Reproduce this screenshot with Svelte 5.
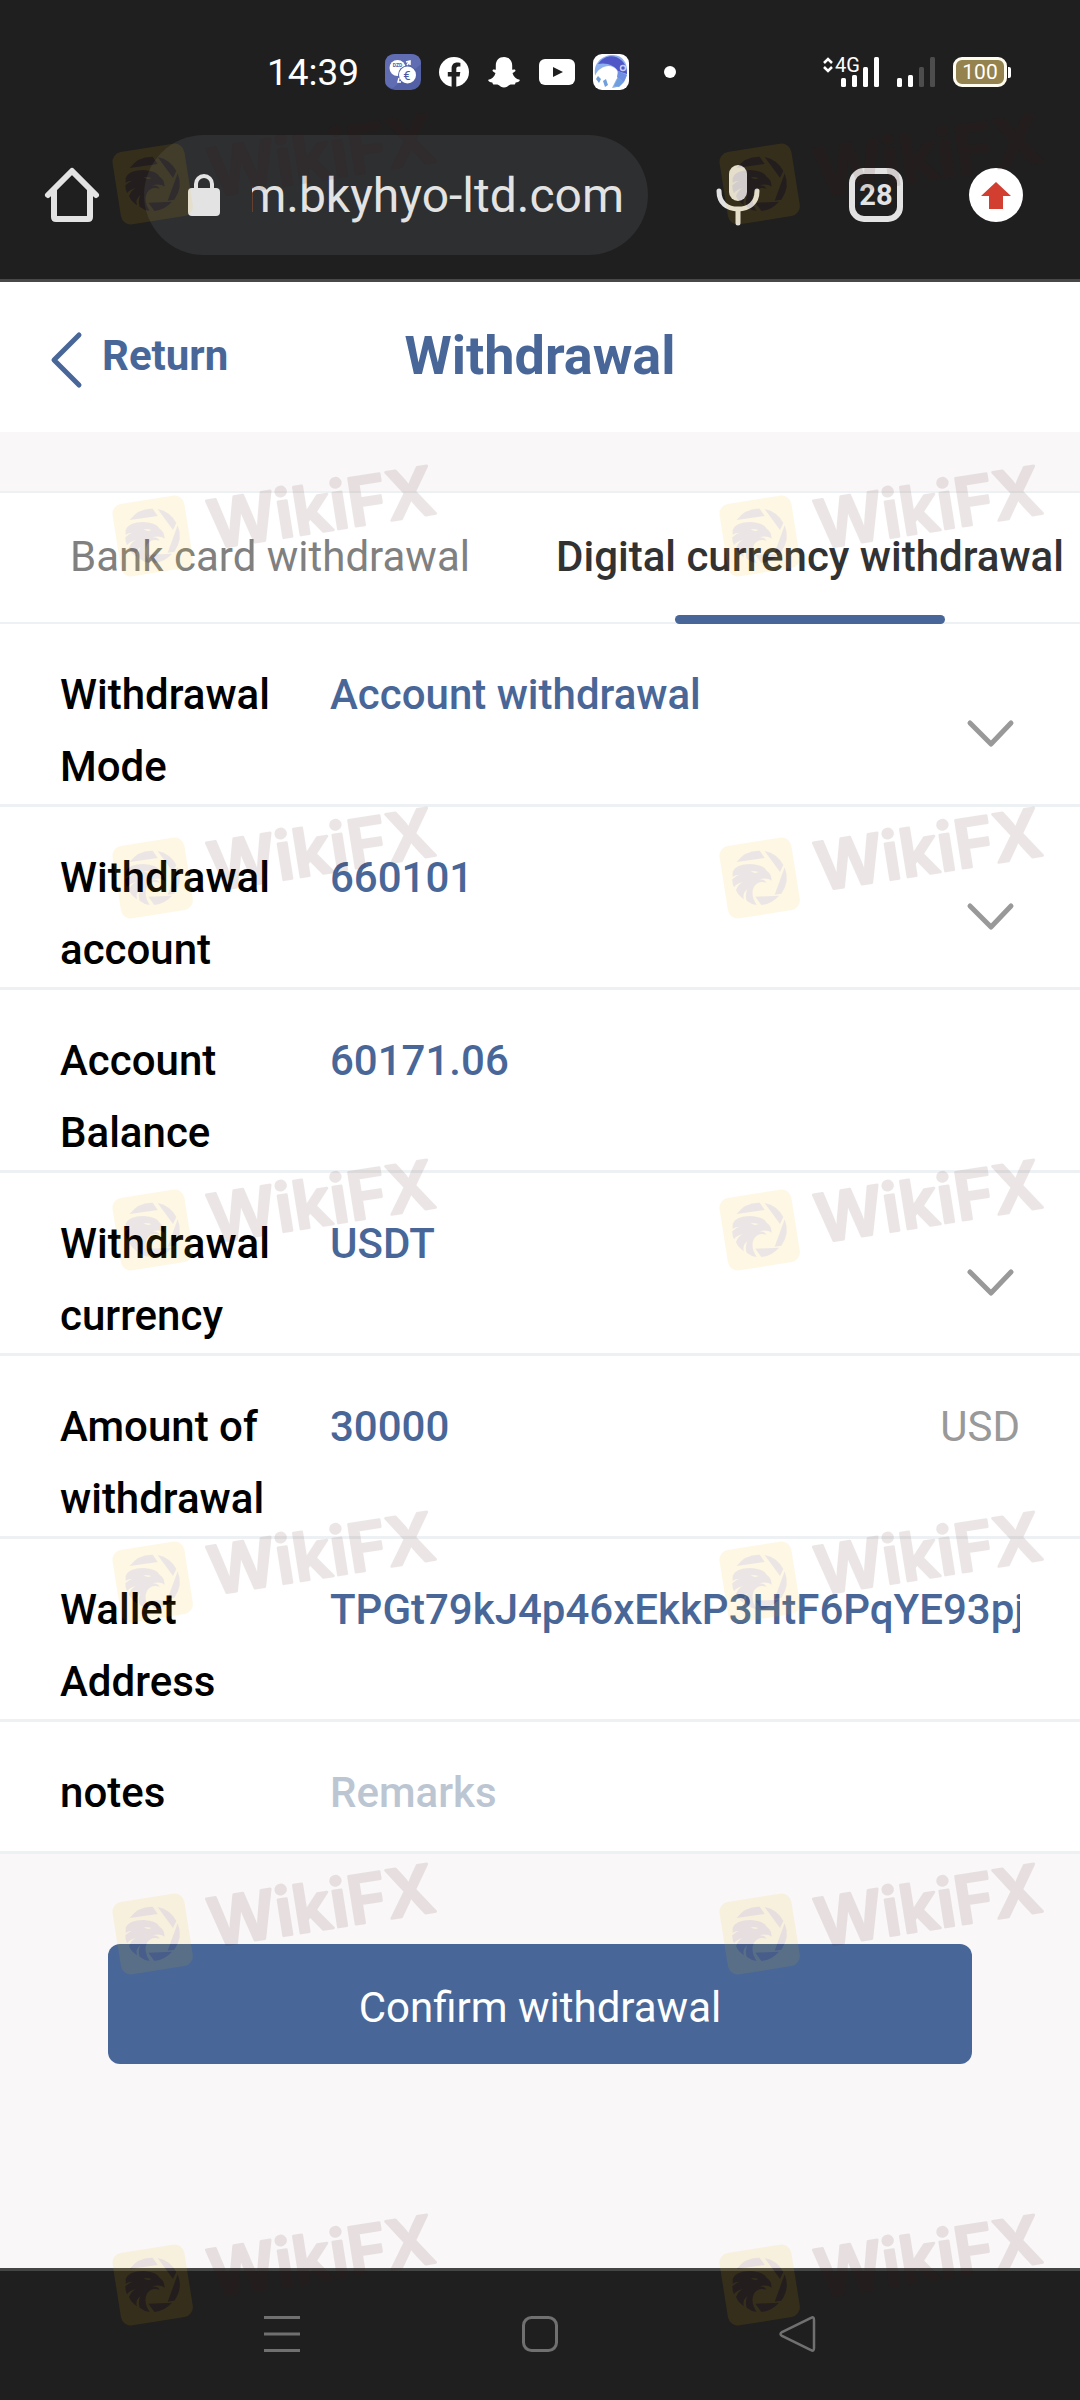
<script>
  const fields = [
    { id: 'mode', label: 'Withdrawal Mode', value: 'Account withdrawal', kind: 'select' },
    { id: 'account', label: 'Withdrawal account', value: '660101', kind: 'select' },
    { id: 'balance', label: 'Account Balance', value: '60171.06', kind: 'output' },
    { id: 'currency', label: 'Withdrawal currency', value: 'USDT', kind: 'select' },
    { id: 'amount', label: 'Amount of withdrawal', value: '30000', kind: 'input', unit: 'USD' },
    { id: 'wallet', label: 'Wallet Address', value: 'TPGt79kJ4p46xEkkP3HtF6PqYE93pj', kind: 'input' },
    { id: 'notes', label: 'notes', value: '', kind: 'input', placeholder: 'Remarks' }
  ];
  const markRows = [110, 462, 804, 1156, 1508, 1860, 2211];
  const markColumns = [112, 719];
  const marks = markRows.flatMap((top) => markColumns.map((left) => ({ top, left })));
</script>

<div class="screen">
  <div class="status">
    <span class="time">14:39</span>
    <div class="notifications">
      <svg width="36" height="36" viewBox="0 0 36 36" aria-hidden="true">
        <rect width="36" height="36" rx="10" fill="#5360a6" />
        <path d="M10 0H26Q36 0 36 10L8 34Q0 34 0 26V10Q0 0 10 0Z" fill="#606db3" />
        <circle cx="12.500" cy="14" r="8" fill="#fff" />
        <circle cx="22.500" cy="21" r="9.500" fill="#5360a6" />
        <circle cx="22.500" cy="21" r="8.500" fill="#fff" />
        <text x="12.500" y="13" font-size="5" font-weight="700" text-anchor="middle" fill="#5360a6">DZD</text>
        <text x="22" y="26" font-size="13" text-anchor="middle" fill="#4b579c">€</text>
        <path d="M21 8l4-1v4M25 7l-3 4M14 24l-1 4h3" fill="none" stroke="#fff" stroke-width="1.500" />
      </svg>
      <svg width="30" height="30" viewBox="0 0 30 30" aria-hidden="true">
        <circle cx="15" cy="15" r="15" fill="#fff" />
        <path d="M12.600 30V19.500H8.800V15h3.800v-3.400c0-3.900 2.200-6 5.700-6 1.500 0 3.100.3 3.100.3v3.600h-1.800c-1.800 0-2.300 1.100-2.300 2.200V15h4l-.7 4.500h-3.300V30z" fill="#1f1f1f" />
      </svg>
      <svg class="snap" width="32" height="31" viewBox="0 0 32 31" aria-hidden="true">
        <path d="M16 0c5 0 8.200 3.500 8.200 8.200v4.300c1 .6 2.300-.6 3.100.4.800 1.200-1 2.200-2.800 3 .9 3.500 3.600 6 7.200 6.800.5 1.600-1.600 2.300-4 2.800-.5.700-.3 1.800-1.200 2-1.600.2-3.200-.5-5 .4-1.700 1-3 2.600-5.500 2.600s-3.800-1.600-5.500-2.600c-1.800-.9-3.400-.2-5-.4-.9-.2-.7-1.300-1.200-2-2.400-.5-4.500-1.200-4-2.800 3.600-.8 6.300-3.300 7.200-6.800-1.800-.8-3.600-1.800-2.800-3 .8-1 2.100.2 3.100-.4V8.200C7.800 3.500 11 0 16 0z" fill="#fff" />
      </svg>
      <svg width="36" height="26" viewBox="0 0 36 26" aria-hidden="true">
        <rect width="36" height="26" rx="6" fill="#fff" />
        <path d="M14 8l10 5-10 5z" fill="#1f1f1f" />
      </svg>
      <svg width="36" height="36" viewBox="0 0 36 36" aria-hidden="true">
        <rect width="36" height="36" rx="9" fill="#fff" />
        <path d="M2 21C0 9 9 1 20 1c10 0 15 9 14 18-1 9-8 15-16 15L2 21z" fill="#8fb0ee" />
        <path d="M5 10C11 1 22 0 28 6c4 3 6 9 6 14l-9-3C22 12 14 8 5 10z" fill="#5058c8" />
        <path d="M2 22C5 14 14 10 20 13c5 2 7 8 3 13l-2 4-2 4H8z" fill="#fff" />
        <path d="M5 22l3 3-2 4-3-4zM10 27l3-2 2 6-3 2zM21 32l4-8 6 4-5 5z" fill="#6f9fdc" />
        <path d="M25 17l9 4-3 7-7-5z" fill="#6f8fe0" />
        <circle cx="30" cy="14" r="2.500" fill="none" stroke="#c3cdf6" stroke-width="1.500" />
      </svg>
    </div>
    <span class="dot"></span>
    <svg class="signal" width="112" height="30" viewBox="0 0 112 30" aria-label="Mobile signal">
      <g fill="none" stroke="#fff" stroke-width="2.500"><path d="M1 6l4-4 4 4M1 10l4 4 4-4" /></g>
      <text x="12" y="15" font-size="20" font-weight="400" fill="#fff">4G</text>
      <g fill="#fff">
        <rect x="18" y="21" width="5" height="9" rx="1.500" /><rect x="29" y="18" width="5" height="12" rx="1.500" />
        <rect x="40" y="10" width="5" height="20" rx="1.500" /><rect x="51" y="0" width="5" height="30" rx="1.500" />
        <rect x="74" y="21" width="5" height="9" rx="1.500" /><rect x="85" y="18" width="5" height="12" rx="1.500" />
      </g>
      <g fill="#4d4d4d"><rect x="96" y="10" width="5" height="20" rx="1.500" /><rect x="107" y="0" width="5" height="30" rx="1.500" /></g>
    </svg>
    <span class="battery">100</span>
    <span class="battery-tip"></span>
  </div>

  <div class="toolbar">
    <button class="icon" aria-label="Home">
      <svg width="54" height="54" viewBox="0 0 54 54">
        <path d="M3 27L27 3l24 24M9 22v27q0 2 2 2h32q2 0 2-2V22" fill="none" stroke="#e3e3e3" stroke-width="6" stroke-linecap="round" stroke-linejoin="round" />
      </svg>
    </button>
    <div class="address">
      <svg width="32" height="42" viewBox="0 0 32 42" aria-hidden="true">
        <rect y="14" width="32" height="28" rx="4" fill="#e3e3e3" />
        <path d="M8 16v-6a8 8 0 0 1 16 0v6" fill="none" stroke="#e3e3e3" stroke-width="4" />
      </svg>
      <div class="url"><span>m.bkyhyo-ltd.com</span></div>
    </div>
    <button class="icon" aria-label="Voice search">
      <svg width="42" height="60" viewBox="0 0 42 60">
        <rect x="12" width="18" height="36" rx="9" fill="#e3e3e3" />
        <path d="M2 26c0 12 8 18 19 18s19-6 19-18M21 44v14" fill="none" stroke="#e3e3e3" stroke-width="5" stroke-linecap="round" />
      </svg>
    </button>
    <button class="tab-count">28</button>
    <button class="icon" aria-label="Update available">
      <svg width="54" height="54" viewBox="0 0 54 54">
        <circle cx="27" cy="27" r="27" fill="#fff" />
        <path d="M27 14l15 14h-8v13H20V28h-8z" fill="#d23f31" />
      </svg>
    </button>
  </div>

  <header>
    <a class="back" href="#return">
      <svg width="30" height="64" viewBox="0 0 30 64" aria-hidden="true">
        <path d="M28 12L3 37l25 25" fill="none" stroke="#486798" stroke-width="5" stroke-linecap="round" stroke-linejoin="round" />
      </svg>
      Return
    </a>
    <h1>Withdrawal</h1>
  </header>

  <main>
    <nav class="tabs">
      <button>Bank card withdrawal</button>
      <button class="active">Digital currency withdrawal</button>
    </nav>
    <form onsubmit={(event) => event.preventDefault()}>
      {#each fields as field}
        <div class="row">
          <label for={field.id}>{field.label}</label>
          {#if field.kind === 'select'}
            <select id={field.id}><option>{field.value}</option></select>
            <svg class="chevron" width="54" height="32" viewBox="0 0 54 32" aria-hidden="true">
              <path d="M4 8l21 21L45 8" fill="none" stroke="#999" stroke-width="5" stroke-linecap="round" stroke-linejoin="round" />
            </svg>
          {:else if field.kind === 'output'}
            <output id={field.id}>{field.value}</output>
          {:else}
            <input id={field.id} type="text" value={field.value} placeholder={field.placeholder} />
            {#if field.unit}<span class="unit">{field.unit}</span>{/if}
          {/if}
        </div>
      {/each}
      <button class="confirm">Confirm withdrawal</button>
    </form>
  </main>

  <div class="system-nav">
    <button class="icon" aria-label="Recent apps">
      <svg width="36" height="36" viewBox="0 0 36 36"><path d="M0 1.500h36M0 18h36M0 34.500h36" stroke="#707070" stroke-width="3" /></svg>
    </button>
    <button class="icon" aria-label="Home screen">
      <svg width="36" height="36" viewBox="0 0 36 36"><rect x="1.500" y="1.500" width="33" height="33" rx="8" fill="none" stroke="#707070" stroke-width="3" /></svg>
    </button>
    <button class="icon" aria-label="Back">
      <svg width="36" height="36" viewBox="0 0 36 36"><path d="M31 2Q34 0 34 4v28q0 4-3 2L2 20q-3-2 0-4z" fill="none" stroke="#707070" stroke-width="2.500" /></svg>
    </button>
  </div>

  <div class="marks" aria-hidden="true">
    {#each marks as mark}
      <svg style:top="{mark.top}px" style:left="{mark.left}px" width="328" height="116" viewBox="95 58 984 348">
        <rect x="108" y="170" width="218" height="220" rx="30" transform="rotate(-9 217 280)" fill="#eeb600" />
        <g fill="#4a1010">
          <path d="M148 232A82 82 0 0 1 217 198L232 220z" />
          <path d="M232 199A82 82 0 0 1 288 241L278 262z" />
          <path d="M292 248A82 82 0 0 1 282 327L262 330z" />
          <path d="M204 336l71-3A82 82 0 0 1 222 361z" />
          <path d="M136 262Q145 238 190 238q38 2 48 20 14 8 15 30-13-10-37-4 16 0 22 10-26-8-38 12-12 24 8 55-18-3-30-13-6-18 2-34-16 12-10 30-18-12-24-28 6-16 20-24-20 6-26 16-6-14-5-24 11-12 25-14-16 0-24 6z" />
        </g>
        <path d="M190 259q12 10 23 3l-8-2z" fill="#eeb600" />
        <g class="wordmark" transform="rotate(-9 390 322)" fill="#4a1010" stroke="#4a1010" stroke-linejoin="round">
          <text x="396" y="320" font-size="200" font-weight="600" stroke-width="8">WikiFX</text>
        </g>
      </svg>
    {/each}
  </div>
</div>

<style>
  :global(body) { margin: 0; background: #f9f7f8; }
  .screen {
    position: relative;
    min-height: 100vh;
    display: flex;
    flex-direction: column;
    overflow: hidden;
    font-family: Roboto, "Liberation Sans", sans-serif;
    font-size: 42px;
  }
  button, input, select, output {
    font: inherit;
    color: inherit;
    margin: 0;
    padding: 0;
    border: 0;
    background: none;
  }
  svg { display: block; flex: none; overflow: visible; }
  .status {
    display: flex;
    align-items: center;
    height: 96px;
    padding: 24px 69px 0 267px;
    background: #1f1f1f;
    color: #fff;
  }
  .time { width: 118px; font-size: 37px; }
  .notifications { display: flex; align-items: center; gap: 18px; }
  .snap { margin: 0 1px; }
  .dot { width: 12px; height: 12px; margin-left: 35px; border-radius: 50%; background: #fff; }
  .signal { margin-left: auto; }
  .battery {
    box-sizing: border-box;
    width: 54px;
    height: 30px;
    margin-left: 18px;
    border: 3px solid #fffdf0;
    border-radius: 9px;
    background: #94824f;
    font-size: 21px;
    line-height: 24px;
    text-align: center;
  }
  .battery-tip { width: 3px; height: 11px; margin-left: 1px; border-radius: 0 2px 2px 0; background: #fff; }
  .toolbar {
    display: flex;
    align-items: center;
    padding: 15px 57px 24px 45px;
    border-bottom: 3px solid #48484a;
    background: #1f1f1f;
  }
  .address {
    display: flex;
    flex: 1;
    align-items: center;
    gap: 32px;
    min-width: 0;
    height: 120px;
    margin: 0 69px 0 45px;
    padding: 0 24px 0 44px;
    box-sizing: border-box;
    border-radius: 60px;
    background: #2e2f31;
  }
  .url {
    display: flex;
    flex: 1;
    justify-content: flex-end;
    min-width: 0;
    overflow: hidden;
    color: #e3e3e3;
    font-size: 48px;
    white-space: nowrap;
  }
  .tab-count {
    width: 54px;
    height: 54px;
    margin: 0 66px 0 90px;
    border: 6px solid #e3e3e3;
    border-radius: 15px;
    color: #e3e3e3;
    font-size: 29px;
    font-weight: 700;
    line-height: 42px;
  }
  header {
    display: grid;
    grid-template-columns: 1fr auto 1fr;
    align-items: center;
    box-sizing: border-box;
    height: 150px;
    padding: 0 51px 4px;
    background: #fff;
    color: #486798;
  }
  .back { display: flex; align-items: center; gap: 21px; color: inherit; font-weight: 700; text-decoration: none; }
  h1 { margin: 0; font-size: 54px; font-weight: 700; }
  main { flex: 1; padding-top: 59px; background: #f9f7f8; }
  .tabs {
    display: grid;
    grid-template-columns: 1fr 1fr;
    height: 129px;
    border-top: 2px solid #eef1f4;
    border-bottom: 2px solid #eef1f4;
    background: #fff;
    color: #808080;
  }
  .tabs button { position: relative; padding-bottom: 2px; white-space: nowrap; }
  .tabs .active { color: #323233; font-weight: 500; }
  .active::after {
    content: "";
    position: absolute;
    right: 25%;
    bottom: -2px;
    left: 25%;
    height: 9px;
    border-radius: 5px;
    background: #486798;
  }
  .row {
    display: flex;
    align-items: flex-start;
    box-sizing: border-box;
    min-height: 132px;
    padding: 35px 60px 1px;
    border-bottom: 3px solid #eef1f4;
    background: #fff;
    color: #486798;
    font-weight: 500;
    line-height: 72px;
  }
  label { width: 220px; margin-right: 50px; flex: none; color: #000; }
  select, input, output { flex: 1; min-width: 0; height: 72px; line-height: 72px; }
  select { appearance: none; }
  input::placeholder { color: #bcc6d3; opacity: 1; }
  .chevron { align-self: center; }
  .unit { color: #999; font-weight: 400; }
  .confirm {
    display: block;
    width: 80%;
    height: 120px;
    margin: 90px auto;
    padding-top: 6px;
    border-radius: 12px;
    background: #486798;
    color: #fff;
  }
  .system-nav {
    display: flex;
    align-items: center;
    justify-content: center;
    gap: 222px;
    box-sizing: border-box;
    height: 132px;
    padding-bottom: 4px;
    border-top: 3px solid #444645;
    background: #1f1f1f;
  }
  .marks { position: absolute; inset: 0; overflow: hidden; pointer-events: none; }
  .marks svg { position: absolute; opacity: 0.1; }
  .wordmark { font-family: Inter, Roboto, sans-serif; }
</style>
